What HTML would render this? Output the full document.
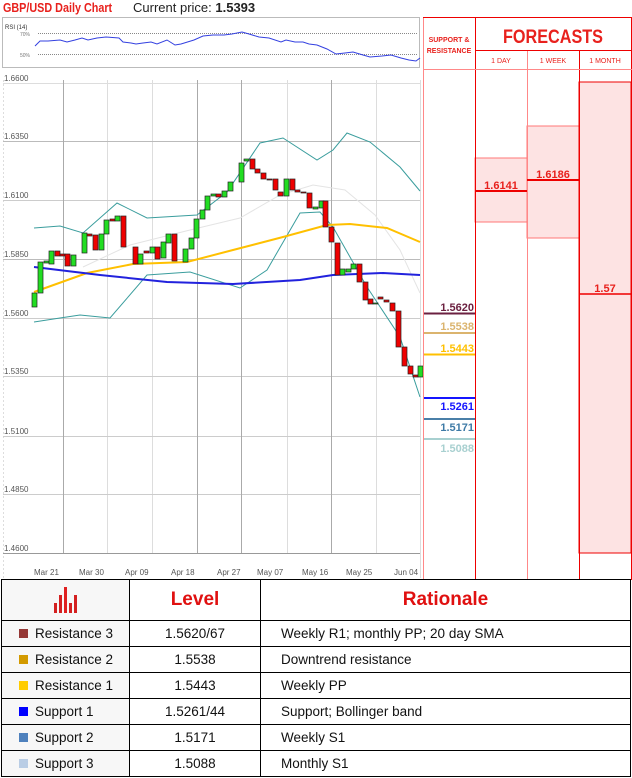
<!DOCTYPE html>
<html><head><meta charset="utf-8"><style>
*{margin:0;padding:0;box-sizing:border-box}
body{width:632px;height:778px;background:#fff;font-family:"Liberation Sans",sans-serif;position:relative;overflow:hidden}
.a{position:absolute}
table{position:absolute;left:1px;top:579px;width:630px;border-collapse:collapse;font-size:13.5px;color:#111}
td{border:1px solid #000;height:26px;padding:0;line-height:14px}
td.c{text-align:center}
td.l{padding-left:20px}
.sw{display:inline-block;width:9px;height:9px;margin:0 7px 0 0}
td.f{background:#f7f7f7;padding-left:17px}
</style></head><body>
<div class="a" style="left:3px;top:0;font-size:13px;font-weight:bold;color:#e8211d;transform:scaleX(0.83);transform-origin:left;white-space:nowrap">GBP/USD Daily Chart</div>
<div class="a" style="left:133px;top:0;font-size:13px;color:#222;white-space:nowrap">Current price: <b>1.5393</b></div>

<svg class="a" style="left:0;top:0" width="632" height="580">
<rect x="2.5" y="17.5" width="417" height="50" fill="#fff" stroke="#bbb"/>
<text x="5" y="29" font-size="6" fill="#333" font-family="Liberation Sans">RSI (14)</text>
<text x="20" y="36" font-size="5" fill="#777" font-family="Liberation Sans">70%</text>
<text x="20" y="57" font-size="5" fill="#777" font-family="Liberation Sans">50%</text>
<line x1="38" y1="33.5" x2="418" y2="33.5" stroke="#888" stroke-dasharray="1,1"/>
<line x1="38" y1="54.5" x2="418" y2="54.5" stroke="#888" stroke-dasharray="1,1"/>
<polyline fill="none" stroke="#3340e0" stroke-width="1" points="35,46 40,41 48,41 60,40 67,42 75,40 82,38 88,40 97,38 106,37 119,38 123,42 131,43 136,44 143,43 151,42 157,44 167,40 175,45 181,44 194,40 203,36 213,35 224,35 232,34 242,32 249,34 259,37 269,38 281,42 286,40 295,42 303,42 309,44 317,45 327,49 336,54 345,53 353,52 363,55 370,57 382,56 391,55 401,58 409,60 416,61 420,58"/>
<g stroke="#ddd" stroke-width="1">
<line x1="3.5" y1="80" x2="3.5" y2="578" stroke-dasharray="2,2"/>
<line x1="107.5" y1="80" x2="107.5" y2="553"/><line x1="152.5" y1="80" x2="152.5" y2="553"/>
<line x1="287.5" y1="80" x2="287.5" y2="553"/><line x1="376.5" y1="80" x2="376.5" y2="553"/><line x1="420.5" y1="80" x2="420.5" y2="578"/>
<line x1="3" y1="83.5" x2="420" y2="83.5"/><line x1="3" y1="141.5" x2="420" y2="141.5" stroke="#bbb"/><line x1="3" y1="200.5" x2="420" y2="200.5" stroke="#ccc"/>
<line x1="3" y1="259.5" x2="420" y2="259.5" stroke="#bbb"/><line x1="3" y1="318.5" x2="420" y2="318.5" stroke="#ccc"/><line x1="3" y1="376.5" x2="420" y2="376.5" stroke="#ccc"/>
<line x1="3" y1="436.5" x2="420" y2="436.5" stroke="#ccc"/><line x1="3" y1="494.5" x2="420" y2="494.5" stroke="#ccc"/><line x1="3" y1="553.5" x2="420" y2="553.5" stroke="#999"/>
</g>
<g stroke="#aaa"><line x1="63.5" y1="80" x2="63.5" y2="553"/><line x1="197.5" y1="80" x2="197.5" y2="553"/><line x1="241.5" y1="80" x2="241.5" y2="553"/><line x1="331.5" y1="80" x2="331.5" y2="553"/></g>
<g font-size="8" fill="#555" font-family="Liberation Sans">
<text x="4" y="81">1.6600</text><text x="4" y="139">1.6350</text><text x="4" y="198">1.6100</text><text x="4" y="257">1.5850</text>
<text x="4" y="316">1.5600</text><text x="4" y="374">1.5350</text><text x="4" y="434">1.5100</text><text x="4" y="492">1.4850</text><text x="4" y="551">1.4600</text>
<text x="34" y="575">Mar 21</text><text x="79" y="575">Mar 30</text><text x="125" y="575">Apr 09</text><text x="171" y="575">Apr 18</text><text x="217" y="575">Apr 27</text><text x="257" y="575">May 07</text><text x="302" y="575">May 16</text><text x="346" y="575">May 25</text><text x="394" y="575">Jun 04</text>
</g>
<polyline fill="none" stroke="#e4e4e4" stroke-width="1" points="83,267 130,245 190,230 240,218 280,195 313,185 345,190 375,215 400,250 420,293"/>
<polyline fill="none" stroke="#3a9d9d" stroke-width="1" points="34,228 60,226 83,233 117,203 147,218 197,215 227,192 260,143 283,138 317,160 333,150 347,133 370,142 400,167 420,191"/>
<polyline fill="none" stroke="#3a9d9d" stroke-width="1" points="34,322 60,318 80,315 110,318 147,275 190,272 240,288 267,270 300,213 320,212 333,227 367,287 400,337 420,397"/>
<polyline fill="none" stroke="#ffc000" stroke-width="2" points="34,292 87,273 133,264 187,262 233,250 283,237 327,225 350,224 387,228 420,242"/>
<polyline fill="none" stroke="#2222dd" stroke-width="2" points="34,267 100,275 167,282 233,284 300,280 333,275 383,273 420,275"/>
<g stroke="#222" stroke-width="0.7">
<rect x="32" y="293" width="5" height="14" fill="#2d2"/><rect x="38" y="262" width="5" height="31" fill="#2d2"/><rect x="44" y="261" width="5" height="2" fill="#2d2"/>
<rect x="49" y="251" width="5" height="13" fill="#2d2"/><rect x="55" y="251" width="5" height="5" fill="#e00"/><rect x="60" y="254" width="5" height="2" fill="#e00"/>
<rect x="65" y="254" width="5" height="12" fill="#e00"/><rect x="71" y="255" width="5" height="11" fill="#2d2"/><rect x="82" y="233" width="5" height="20" fill="#2d2"/>
<rect x="87" y="234" width="5" height="2" fill="#e00"/><rect x="93" y="235" width="5" height="15" fill="#e00"/><rect x="99" y="234" width="5" height="16" fill="#2d2"/>
<rect x="104" y="220" width="5" height="14" fill="#2d2"/><rect x="110" y="219" width="5" height="2" fill="#e00"/><rect x="115" y="216" width="5" height="5" fill="#2d2"/>
<rect x="121" y="216" width="5" height="31" fill="#e00"/><rect x="133" y="247" width="5" height="17" fill="#e00"/><rect x="138" y="254" width="5" height="10" fill="#2d2"/>
<rect x="144" y="251" width="5" height="2" fill="#e00"/><rect x="150" y="247" width="5" height="6" fill="#2d2"/><rect x="155" y="247" width="5" height="12" fill="#e00"/>
<rect x="161" y="242" width="5" height="16" fill="#2d2"/><rect x="166" y="234" width="5" height="9" fill="#2d2"/><rect x="172" y="234" width="5" height="27" fill="#e00"/>
<rect x="183" y="249" width="5" height="13" fill="#2d2"/><rect x="189" y="238" width="5" height="11" fill="#2d2"/><rect x="194" y="219" width="5" height="19" fill="#2d2"/>
<rect x="200" y="210" width="5" height="9" fill="#2d2"/><rect x="205" y="196" width="5" height="14" fill="#2d2"/><rect x="211" y="194" width="5" height="2" fill="#2d2"/>
<rect x="216" y="194" width="5" height="3" fill="#e00"/><rect x="222" y="191" width="5" height="6" fill="#2d2"/><rect x="228" y="182" width="5" height="9" fill="#2d2"/>
<rect x="239" y="163" width="5" height="19" fill="#2d2"/><rect x="244" y="159" width="5" height="2" fill="#2d2"/><rect x="250" y="159" width="5" height="10" fill="#e00"/>
<rect x="255" y="169" width="5" height="4" fill="#e00"/><rect x="261" y="173" width="5" height="6" fill="#e00"/><rect x="267" y="179" width="5" height="1" fill="#e00"/>
<rect x="273" y="179" width="5" height="11" fill="#e00"/><rect x="278" y="192" width="5" height="4" fill="#e00"/><rect x="284" y="179" width="5" height="17" fill="#2d2"/>
<rect x="290" y="179" width="5" height="11" fill="#e00"/><rect x="295" y="190" width="5" height="2" fill="#e00"/><rect x="301" y="192" width="5" height="1" fill="#e00"/>
<rect x="307" y="193" width="5" height="15" fill="#e00"/><rect x="313" y="207" width="5" height="2" fill="#2d2"/><rect x="319" y="201" width="5" height="7" fill="#2d2"/>
<rect x="323" y="201" width="5" height="26" fill="#e00"/><rect x="329" y="227" width="5" height="15" fill="#e00"/><rect x="335" y="243" width="5" height="32" fill="#e00"/>
<rect x="340" y="269" width="5" height="6" fill="#2d2"/><rect x="346" y="269" width="5" height="3" fill="#2d2"/><rect x="351" y="264" width="5" height="5" fill="#2d2"/>
<rect x="357" y="264" width="5" height="18" fill="#e00"/><rect x="363" y="282" width="5" height="18" fill="#e00"/><rect x="368" y="299" width="5" height="5" fill="#e00"/>
<rect x="373" y="303" width="5" height="1" fill="#2d2"/><rect x="378" y="297" width="5" height="2" fill="#e00"/><rect x="384" y="300" width="5" height="2" fill="#e00"/>
<rect x="390" y="303" width="5" height="8" fill="#e00"/><rect x="396" y="311" width="5" height="36" fill="#e00"/><rect x="402" y="347" width="5" height="19" fill="#e00"/>
<rect x="408" y="366" width="5" height="8" fill="#e00"/><rect x="413" y="375" width="5" height="2" fill="#e00"/><rect x="418" y="366" width="5" height="11" fill="#2d2"/>
</g>
<rect x="475" y="158" width="52" height="64" fill="#fde3e3" stroke="#f77"/>
<rect x="527" y="126" width="52" height="112" fill="#fde3e3" stroke="#f77"/>
<rect x="579" y="82" width="52" height="471" fill="#fde3e3" stroke="#e00"/>
<line x1="423.5" y1="17" x2="423.5" y2="580" stroke="#f88"/>
<line x1="475.5" y1="17" x2="475.5" y2="580" stroke="#e00"/>
<line x1="527.5" y1="51" x2="527.5" y2="580" stroke="#f88"/>
<line x1="579.5" y1="51" x2="579.5" y2="580" stroke="#e00"/>
<line x1="631.5" y1="17" x2="631.5" y2="580" stroke="#e00"/>
<line x1="423" y1="17.5" x2="632" y2="17.5" stroke="#e00"/>
<line x1="475" y1="50.5" x2="632" y2="50.5" stroke="#e00"/>
<line x1="423" y1="69.5" x2="632" y2="69.5" stroke="#f88"/>
<g font-family="Liberation Sans" font-weight="bold" fill="#e8211d">
<text x="449" y="42" font-size="7" text-anchor="middle">SUPPORT &amp;</text>
<text x="449" y="53" font-size="7" text-anchor="middle">RESISTANCE</text>
<text x="553" y="43" font-size="19" text-anchor="middle" textLength="100" lengthAdjust="spacingAndGlyphs">FORECASTS</text>
<text x="501" y="63" font-size="7" font-weight="normal" text-anchor="middle">1 DAY</text>
<text x="553" y="63" font-size="7" font-weight="normal" text-anchor="middle">1 WEEK</text>
<text x="605" y="63" font-size="7" font-weight="normal" text-anchor="middle">1 MONTH</text>
<text x="501" y="189" font-size="11" text-anchor="middle">1.6141</text>
<text x="553" y="178" font-size="11" text-anchor="middle">1.6186</text>
<text x="605" y="292" font-size="11" text-anchor="middle">1.57</text>
</g>
<line x1="475" y1="191" x2="527" y2="191" stroke="#e00" stroke-width="2"/>
<line x1="527" y1="180" x2="579" y2="180" stroke="#e00" stroke-width="2"/>
<line x1="579" y1="294" x2="631" y2="294" stroke="#e00" stroke-width="1.5"/>
<g font-family="Liberation Sans" font-weight="bold" font-size="11" text-anchor="end">
<text x="474" y="311" fill="#6b2040">1.5620</text><line x1="424" y1="313.5" x2="475" y2="313.5" stroke="#6b2040" stroke-width="2"/>
<text x="474" y="330" fill="#dbb46e">1.5538</text><line x1="424" y1="333" x2="475" y2="333" stroke="#dbb46e" stroke-width="2"/>
<text x="474" y="352" fill="#ffc000">1.5443</text><line x1="424" y1="354.5" x2="475" y2="354.5" stroke="#ffc000" stroke-width="2"/>
<line x1="424" y1="398" x2="475" y2="398" stroke="#1515ff" stroke-width="2"/><text x="474" y="410" fill="#1515ff">1.5261</text>
<line x1="424" y1="419" x2="475" y2="419" stroke="#4a7fa8" stroke-width="2"/><text x="474" y="431" fill="#3d7aa6">1.5171</text>
<line x1="424" y1="439" x2="475" y2="439" stroke="#a8d0d0" stroke-width="2"/><text x="474" y="452" fill="#a8d0d0">1.5088</text>
</g>
</svg>

<table>
<tr><td style="width:128px;height:41px;background:#f7f7f7;text-align:center"><svg width="24" height="26" style="vertical-align:middle"><rect x="0" y="16" width="3" height="10" fill="#d42020"/><rect x="5" y="8" width="3" height="18" fill="#d42020"/><rect x="10" y="0" width="3" height="26" fill="#e02020"/><rect x="15" y="16" width="3" height="10" fill="#d42020"/><rect x="20" y="8" width="3" height="18" fill="#d42020"/></svg></td>
<td class="c" style="width:131px;font-size:19px;font-weight:bold;color:#e01010">Level</td>
<td class="c" style="font-size:19px;font-weight:bold;color:#e01010">Rationale</td></tr>
<tr><td class="f"><span class="sw" style="background:#953735"></span>Resistance 3</td><td class="c">1.5620/67</td><td class="l">Weekly R1; monthly PP; 20 day SMA</td></tr>
<tr><td class="f"><span class="sw" style="background:#d39a00"></span>Resistance 2</td><td class="c">1.5538</td><td class="l">Downtrend resistance</td></tr>
<tr><td class="f"><span class="sw" style="background:#ffcc00"></span>Resistance 1</td><td class="c">1.5443</td><td class="l">Weekly PP</td></tr>
<tr><td class="f"><span class="sw" style="background:#0000ff"></span>Support 1</td><td class="c">1.5261/44</td><td class="l">Support; Bollinger band</td></tr>
<tr><td class="f"><span class="sw" style="background:#4f81bd"></span>Support 2</td><td class="c">1.5171</td><td class="l">Weekly S1</td></tr>
<tr><td class="f"><span class="sw" style="background:#b9cde5"></span>Support 3</td><td class="c">1.5088</td><td class="l">Monthly S1</td></tr>
</table>
</body></html>
